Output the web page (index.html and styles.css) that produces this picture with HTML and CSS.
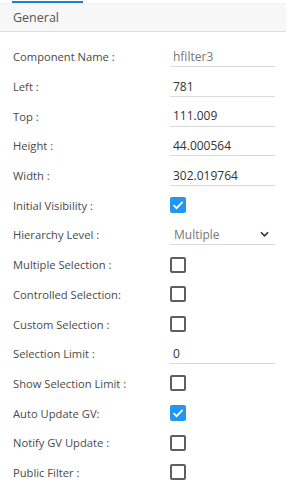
FILE: index.html
```html
<!DOCTYPE html>
<html lang="en">
<head>
    <meta charset="UTF-8">
    <meta name="viewport" content="width=device-width, initial-scale=1.0">
    <title>Properties</title>
    <link rel="stylesheet" href="styles.css">
</head>
<body>
    <div class="panel">
        <div class="tab-line"></div>
        <div class="section-header">General</div>
        <div class="form">
            <div class="row">
                <span class="label">Component Name :</span>
                <input class="field readonly" type="text" value="hfilter3" readonly>
            </div>
            <div class="row">
                <span class="label">Left :</span>
                <input class="field" type="text" value="781">
            </div>
            <div class="row">
                <span class="label">Top :</span>
                <input class="field" type="text" value="111.009">
            </div>
            <div class="row">
                <span class="label">Height :</span>
                <input class="field" type="text" value="44.000564">
            </div>
            <div class="row">
                <span class="label">Width :</span>
                <input class="field" type="text" value="302.019764">
            </div>
            <div class="row">
                <span class="label">Initial Visibility :</span>
                <span class="check checked"><svg viewBox="0 0 16 16"><path d="M3.5 8.2 L6.6 11.2 L12.6 4.8" /></svg></span>
            </div>
            <div class="row">
                <span class="label">Hierarchy Level :</span>
                <div class="select">
                    <span>Multiple</span>
                    <svg class="chevron" viewBox="0 0 10 6"><path d="M1 1 L5 5 L9 1" /></svg>
                </div>
            </div>
            <div class="row">
                <span class="label">Multiple Selection :</span>
                <span class="check"></span>
            </div>
            <div class="row">
                <span class="label">Controlled Selection:</span>
                <span class="check"></span>
            </div>
            <div class="row">
                <span class="label">Custom Selection :</span>
                <span class="check"></span>
            </div>
            <div class="row">
                <span class="label">Selection Limit :</span>
                <input class="field" type="text" value="0">
            </div>
            <div class="row">
                <span class="label">Show Selection Limit :</span>
                <span class="check"></span>
            </div>
            <div class="row">
                <span class="label">Auto Update GV:</span>
                <span class="check checked"><svg viewBox="0 0 16 16"><path d="M3.5 8.2 L6.6 11.2 L12.6 4.8" /></svg></span>
            </div>
            <div class="row">
                <span class="label">Notify GV Update :</span>
                <span class="check"></span>
            </div>
            <div class="row">
                <span class="label">Public Filter :</span>
                <span class="check"></span>
            </div>
        </div>
    </div>
</body>
</html>
```

FILE: styles.css
```css
body {
    margin: 0;
    padding: 0;
    background: #ffffff;
    font-family: "Open Sans", Lato, sans-serif;
    color: #444;
}

.panel {
    width: 286px;
    padding-top: 1px;
}

.tab-line {
    width: 71px;
    height: 2px;
    margin-left: 12px;
    background: #1a7fd1;
}

.section-header {
    height: 27px;
    line-height: 27px;
    padding-left: 13px;
    background: #f7f7f7;
    border-top: 1px solid #eef1ef;
    border-bottom: 1px solid #dedede;
    font-size: 12.5px;
    color: #555;
}

.form {
    padding-top: 10px;
}

.row {
    display: flex;
    align-items: center;
    height: 29.7px;
    padding-left: 13px;
}

.label {
    width: 157px;
    font-size: 11.2px;
    color: #4a4a4a;
}

.field {
    box-sizing: border-box;
    width: 105px;
    height: 21px;
    margin: 0;
    padding: 0 0 0 3px;
    border: none;
    border-bottom: 1px solid #dadada;
    outline: none;
    background: transparent;
    font-family: "Open Sans", Lato, sans-serif;
    font-size: 12px;
    color: #333;
}

.field.readonly {
    color: #777;
}

.check {
    box-sizing: border-box;
    width: 16px;
    height: 16px;
    border: 2px solid #5f5f5f;
    border-radius: 2px;
}

.check.checked {
    border: none;
    background: #2196f3;
}

.check svg {
    display: block;
    width: 16px;
    height: 16px;
    fill: none;
    stroke: #fff;
    stroke-width: 1.8;
}

.select {
    box-sizing: border-box;
    display: flex;
    align-items: center;
    justify-content: space-between;
    width: 105px;
    height: 21px;
    padding: 0 6px 0 4px;
    border-bottom: 1px solid #dadada;
    font-size: 12px;
    color: #777;
}

.chevron {
    width: 9px;
    height: 6px;
    fill: none;
    stroke: #333;
    stroke-width: 1.8;
}
```
